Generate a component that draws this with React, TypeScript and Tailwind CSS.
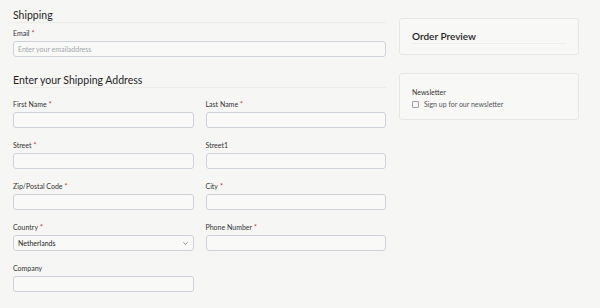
import { ChevronDown } from 'lucide-react';

function Label({ text, required }: { text: string; required?: boolean }) {
  return (
    <label className="block text-[7px] leading-[9px] text-[#333] mb-[3px]">
      {text}
      {required && <span className="text-[#dc2626] ml-[2px]">*</span>}
    </label>
  );
}

function Field({ label, required, placeholder }: { label: string; required?: boolean; placeholder?: string }) {
  return (
    <div>
      <Label text={label} required={required} />
      <input
        placeholder={placeholder}
        className="block w-full h-[16px] rounded-[3px] border border-[#cdd2d9] bg-[#f9f9f8] px-[4px] text-[7px] placeholder:text-[#a3a6ab] outline-none"
      />
    </div>
  );
}

export default function App() {
  return (
    <div
      className="w-[600px] h-[308px] bg-[#f6f6f5] overflow-hidden flex gap-[13px] pl-[13px] pr-[21px] pt-[10px]"
      style={{ fontFamily: 'Lato, sans-serif' }}
    >
      {/* left: form */}
      <div className="w-[373px]">
        <h2 className="text-[10.5px] leading-[11px] text-[#1f1f1f] pb-[1px] border-b border-[#ececeb]">Shipping</h2>
        <div className="mt-[6px]">
          <Field label="Email" required placeholder="Enter your emailaddress" />
        </div>

        <h2 className="mt-[18px] text-[10.5px] leading-[11px] text-[#1f1f1f] pb-[1px] border-b border-[#ececeb]">
          Enter your Shipping Address
        </h2>

        <div className="mt-[12px] grid grid-cols-2 gap-x-[12px] gap-y-[13px]">
          <Field label="First Name" required />
          <Field label="Last Name" required />
          <Field label="Street" required />
          <Field label="Street1" />
          <Field label="Zip/Postal Code" required />
          <Field label="City" required />
          <div>
            <Label text="Country" required />
            <div className="flex items-center justify-between h-[16px] rounded-[3px] border border-[#cdd2d9] bg-[#f9f9f8] px-[4px] text-[7px] text-[#222]">
              <span>Netherlands</span>
              <ChevronDown size={7} strokeWidth={2} className="text-[#444]" />
            </div>
          </div>
          <Field label="Phone Number" required />
          <Field label="Company" />
        </div>
      </div>

      {/* right: side cards */}
      <div className="w-[180px] pt-[8px] flex flex-col gap-[18px]">
        <div className="h-[37px] rounded-[3px] border border-[#e6e6e5] bg-[#f8f8f7] px-[12px] pt-[12px]">
          <h3 className="text-[10px] leading-[11px] font-semibold text-[#1f1f1f] pb-[1px] border-b border-[#ededec]">Order Preview</h3>
        </div>
        <div className="h-[47px] rounded-[3px] border border-[#e6e6e5] bg-[#f8f8f7] px-[12px] pt-[14px]">
          <div className="text-[7px] leading-[9px] text-[#333]">Newsletter</div>
          <label className="mt-[3px] flex items-center gap-[5px] text-[7px] leading-[9px] text-[#555]">
            <span className="w-[7px] h-[7px] rounded-[1px] border border-[#9aa0a8] bg-[#f6f6f5]" />
            Sign up for our newsletter
          </label>
        </div>
      </div>
    </div>
  );
}
